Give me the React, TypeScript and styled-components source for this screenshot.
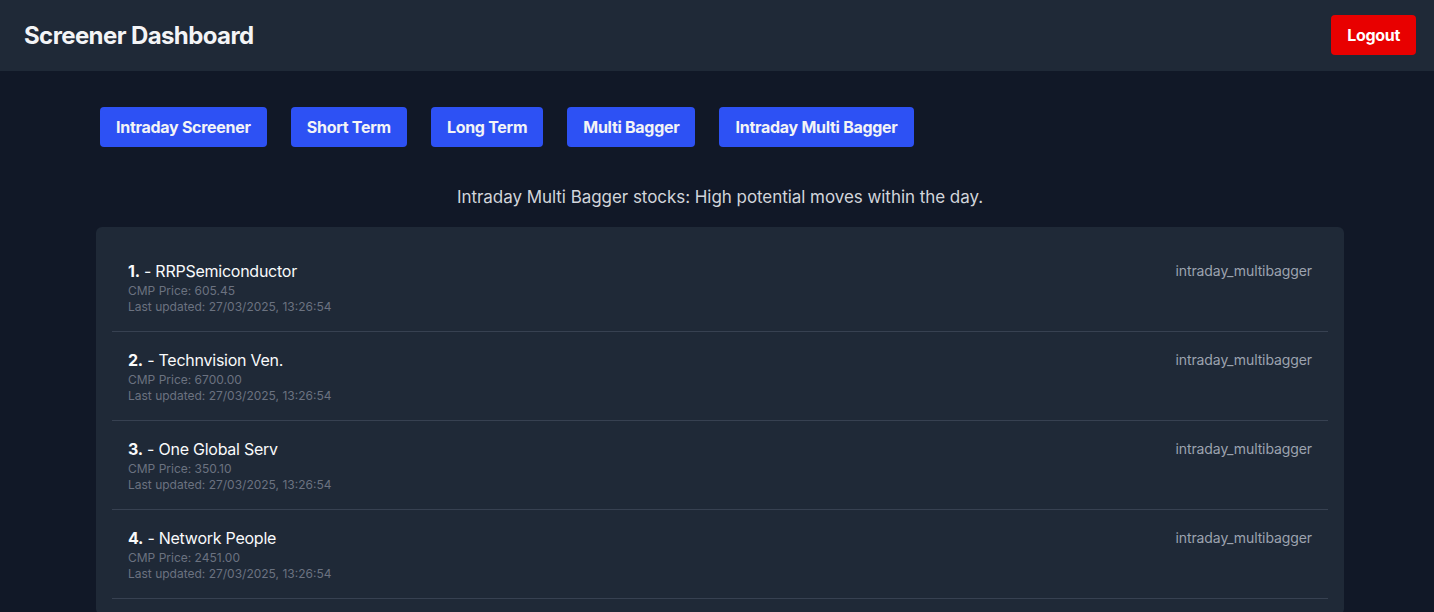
import React from "react";
import styled, { createGlobalStyle } from "styled-components";

const GlobalStyle = createGlobalStyle`
  * { box-sizing: border-box; }
  html, body { margin: 0; padding: 0; }
  body {
    background: #111827;
    font-family: Inter, "Noto Sans", "Liberation Sans", sans-serif;
    color: #ffffff;
    min-height: 100vh;
    overflow: hidden;
  }
`;

const Page = styled.div`
  min-height: 100vh;
  background: #111827;
`;

const Header = styled.header`
  height: 71px;
  background: #1f2937;
  display: flex;
  align-items: center;
  justify-content: space-between;
  padding: 0 18px 1px 24px;
`;

const Title = styled.h1`
  margin: 0;
  font-size: 24px;
  font-weight: 700;
  color: #f3f4f6;
  letter-spacing: -0.6px;
`;

const LogoutButton = styled.button`
  height: 40px;
  padding: 0 16px;
  background: #e80000;
  color: #ffffff;
  border: none;
  border-radius: 4px;
  font-family: inherit;
  font-size: 16px;
  font-weight: 700;
  letter-spacing: -0.3px;
  cursor: pointer;
`;

const Main = styled.main`
  padding: 36px 90px 0 96px;
`;

const Tabs = styled.nav`
  display: flex;
  gap: 24px;
  padding-left: 4px;
`;

const TabButton = styled.button`
  height: 40px;
  padding: 0 16px;
  background: #2d51f4;
  color: #f3f4f6;
  border: none;
  border-radius: 4px;
  font-family: inherit;
  font-size: 16px;
  font-weight: 700;
  letter-spacing: -0.28px;
  cursor: pointer;
`;

const Description = styled.p`
  margin: 36px 0 16px;
  text-align: center;
  font-size: 17px;
  line-height: 28px;
  letter-spacing: -0.05px;
  color: #d1d5db;
`;

const Card = styled.section`
  background: #1f2937;
  border-radius: 6px;
  padding: 16px;
`;

const Item = styled.div`
  display: flex;
  justify-content: space-between;
  align-items: flex-start;
  padding: 16px;
  border-bottom: 1px solid #374151;
`;

const Info = styled.div`
  display: flex;
  flex-direction: column;
`;

const Name = styled.div`
  font-size: 16px;
  line-height: 24px;
  letter-spacing: -0.25px;
  color: #f9fafb;
`;

const Rank = styled.span`
  font-weight: 700;
`;

const Meta = styled.div`
  font-size: 12px;
  line-height: 16px;
  color: #6b7280;
`;

const Tag = styled.div`
  font-size: 14px;
  line-height: 20px;
  margin-top: 2px;
  letter-spacing: -0.1px;
  color: #9ca3af;
`;

const tabs = ["Intraday Screener", "Short Term", "Long Term", "Multi Bagger", "Intraday Multi Bagger"];

const stocks = [
  { name: "RRPSemiconductor", price: "605.45" },
  { name: "Technvision Ven.", price: "6700.00" },
  { name: "One Global Serv", price: "350.10" },
  { name: "Network People", price: "2451.00" },
];

export default function App() {
  return (
    <Page>
      <GlobalStyle />
      <Header>
        <Title>Screener Dashboard</Title>
        <LogoutButton>Logout</LogoutButton>
      </Header>
      <Main>
        <Tabs>
          {tabs.map((t) => (
            <TabButton key={t}>{t}</TabButton>
          ))}
        </Tabs>
        <Description>Intraday Multi Bagger stocks: High potential moves within the day.</Description>
        <Card>
          {stocks.map((s, i) => (
            <Item key={s.name}>
              <Info>
                <Name>
                  <Rank>{i + 1}.</Rank> - {s.name}
                </Name>
                <Meta>CMP Price: {s.price}</Meta>
                <Meta>Last updated: 27/03/2025, 13:26:54</Meta>
              </Info>
              <Tag>intraday_multibagger</Tag>
            </Item>
          ))}
        </Card>
      </Main>
    </Page>
  );
}
